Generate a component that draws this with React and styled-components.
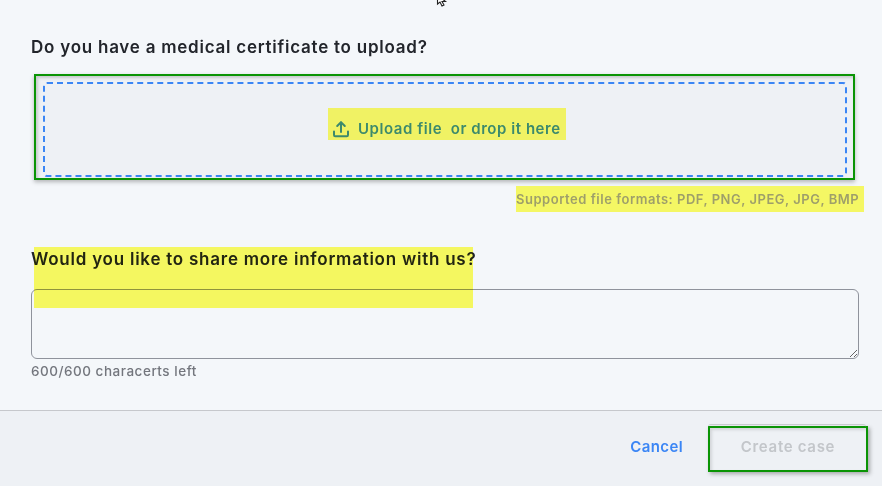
import React from "react";
import styled, { createGlobalStyle } from "styled-components";

const Global = createGlobalStyle`
  html, body { margin: 0; padding: 0; background: #f4f7fa; }
  * { box-sizing: border-box; }
`;

const Page = styled.div`
  position: relative;
  width: 882px;
  height: 486px;
  overflow: hidden;
  background: #f4f7fa;
  display: flex;
  flex-direction: column;
  font-family: "Inter", "Liberation Sans", sans-serif;
`;

const Cursor = styled.svg`
  position: absolute;
  left: 436px;
  top: -6px;
`;

const Form = styled.main`
  flex: 1;
  padding: 37px 23px 0 31px;
  display: flex;
  flex-direction: column;
`;

const Question = styled.h2`
  margin: 0;
  font-size: 17px;
  line-height: 20px;
  font-weight: 600;
  letter-spacing: 0.76px;
  color: #22252b;
  white-space: nowrap;
`;

const DropOutline = styled.div`
  margin: 17px 4px 0 3px;
  height: 106px;
  background: #eef1f5;
  border: 2px solid #0a9405;
  box-shadow: 0 2px 4px rgba(60, 60, 60, 0.35), inset 2px 2px 3px rgba(60, 60, 60, 0.22);
  padding: 6px 6px 2px 7px;
`;

const DropZone = styled.div`
  height: 95px;
  background: #eef1f5;
  border: 2px dashed #3b86f5;
  border-radius: 4px;
  padding: 24px 0 0 283px;
`;

const UploadLabel = styled.div`
  width: 238px;
  height: 32px;
  background: #f0f264;
  display: flex;
  align-items: center;
  padding: 9px 0 0 4px;
  gap: 8px;
  color: #3c8a6c;
  font-size: 15px;
  font-weight: 600;
  letter-spacing: 0.55px;
  white-space: pre;
`;

const HintRow = styled.div`
  display: flex;
  justify-content: flex-end;
  margin: 6px -5px 0 0;
`;

const Hint = styled.div`
  width: 348px;
  height: 26px;
  background: #f4f764;
  color: #9e9f6a;
  font-size: 13px;
  font-weight: 600;
  letter-spacing: 0.52px;
  line-height: 26px;
  white-space: nowrap;
`;

const InfoBlock = styled.div`
  position: relative;
  margin-top: 37px;
`;

const Highlight = styled.div`
  position: absolute;
  left: 3px;
  top: -2px;
  width: 439px;
  height: 61px;
  background: #ffff62;
  mix-blend-mode: multiply;
  pointer-events: none;
`;

const Notes = styled.textarea`
  display: block;
  width: 828px;
  height: 70px;
  margin-top: 20px;
  background: transparent;
  border: 1px solid #8f939c;
  border-radius: 6px;
  outline: none;
  resize: vertical;
`;

const Counter = styled.div`
  margin-top: 4px;
  font-size: 13.5px;
  line-height: 16px;
  font-weight: 500;
  letter-spacing: 0.52px;
  color: #73767d;
`;

const Footer = styled.footer`
  height: 76px;
  background: #eef1f5;
  border-top: 1px solid #c6c8cc;
  display: flex;
  align-items: center;
  justify-content: flex-end;
  padding: 0 14px 0 0;
`;

const CancelButton = styled.button`
  border: 0;
  background: none;
  padding: 0;
  margin: 0 25px 5px 0;
  color: #3b86f5;
  font: 600 15px "Inter", "Liberation Sans", sans-serif;
  letter-spacing: 0.4px;
`;

const CreateButton = styled.button`
  position: relative;
  width: 160px;
  height: 46px;
  padding: 0 0 5px;
  background: #eef1f5;
  border: 2px solid #0a9405;
  box-shadow: 2px 2px 4px rgba(60, 60, 60, 0.4), inset 2px 2px 3px rgba(60, 60, 60, 0.15);
  color: #c3c6ca;
  font: 600 15px "Inter", "Liberation Sans", sans-serif;
  letter-spacing: 0.7px;

  &::before {
    content: "";
    position: absolute;
    left: -2px;
    top: -4px;
    width: 158px;
    height: 2px;
    border-top: 1px solid #c9cbcf;
    border-radius: 4px 4px 0 0;
  }
`;

export default function App() {
  return (
    <Page>
      <Global />
      <Cursor width="12" height="14" viewBox="0 0 12 14">
        <path d="M1.5 1 L1.5 10 L4 8 L6 12 L8 11 L6 7.5 L9.5 7.5 Z" fill="#fff" stroke="#222" strokeWidth="1.1" />
      </Cursor>
      <Form>
        <Question>Do you have a medical certificate to upload?</Question>
        <DropOutline>
          <DropZone>
            <UploadLabel>
              <svg width="18" height="18" viewBox="0 0 18 18" fill="none" stroke="#3c8a6c" strokeWidth="2" strokeLinecap="round" strokeLinejoin="round">
                <path d="M2 11.5 V15 a1.2 1.2 0 0 0 1.2 1.2 H14.8 a1.2 1.2 0 0 0 1.2 -1.2 V11.5" />
                <path d="M9 12 V2.5" />
                <path d="M5.2 6 L9 2.2 L12.8 6" />
              </svg>
              <span>Upload file  or drop it here</span>
            </UploadLabel>
          </DropZone>
        </DropOutline>
        <HintRow>
          <Hint>Supported file formats: PDF, PNG, JPEG, JPG, BMP</Hint>
        </HintRow>
        <InfoBlock>
          <Question>Would you like to share more information with us?</Question>
          <Notes />
          <Highlight />
        </InfoBlock>
        <Counter>600/600 characerts left</Counter>
      </Form>
      <Footer>
        <CancelButton>Cancel</CancelButton>
        <CreateButton>Create case</CreateButton>
      </Footer>
    </Page>
  );
}
